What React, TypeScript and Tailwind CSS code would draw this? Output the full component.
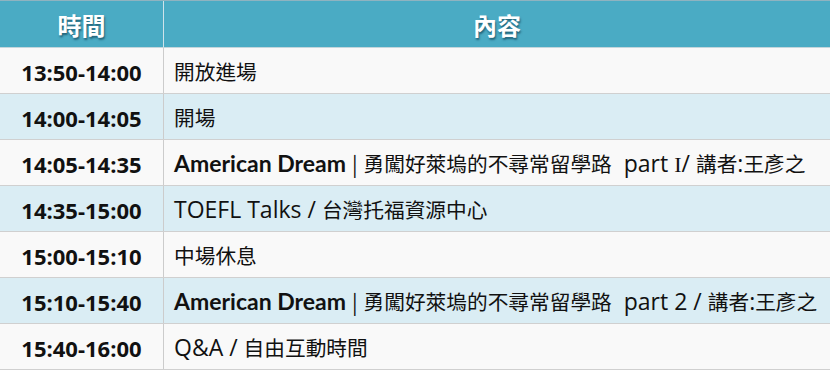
type Seg = { t: string; b?: boolean; serif?: boolean };

const rows: { time: string; segs: Seg[] }[] = [
  { time: '13:50-14:00', segs: [{ t: '開放進場' }] },
  { time: '14:00-14:05', segs: [{ t: '開場' }] },
  {
    time: '14:05-14:35',
    segs: [
      { t: 'American Dream', b: true },
      { t: ' | 勇闖好萊塢的不尋常留學路  part ' },
      { t: 'I', serif: true },
      { t: '/ 講者:王彥之' },
    ],
  },
  { time: '14:35-15:00', segs: [{ t: 'TOEFL Talks / 台灣托福資源中心' }] },
  { time: '15:00-15:10', segs: [{ t: '中場休息' }] },
  {
    time: '15:10-15:40',
    segs: [
      { t: 'American Dream', b: true },
      { t: ' | 勇闖好萊塢的不尋常留學路  part 2 / 講者:王彥之' },
    ],
  },
  { time: '15:40-16:00', segs: [{ t: 'Q&A / 自由互動時間' }] },
];

// split a string into CJK and latin runs so each gets its own size
function runs(s: string) {
  const out: { t: string; cjk: boolean }[] = [];
  for (const ch of s) {
    const cjk = /[|\u3000-\u9fff\uff00-\uffef]/.test(ch);
    const last = out[out.length - 1];
    if (last && last.cjk === cjk) last.t += ch;
    else out.push({ t: ch, cjk });
  }
  return out;
}

function Content({ segs }: { segs: Seg[] }) {
  return (
    <span className="whitespace-pre">
      {segs.map((s, i) => {
        if (s.b)
          return (
            <span key={i} className="font-bold text-[23px] font-['Lato',sans-serif]">
              {s.t}
            </span>
          );
        if (s.serif)
          return (
            <span key={i} className="text-[22px] font-['Liberation_Serif',serif]">
              {s.t}
            </span>
          );
        return runs(s.t).map((r, j) => (
          <span
            key={i + '-' + j}
            className={
              r.cjk
                ? "text-[20.7px] font-['Noto_Sans_CJK_TC',sans-serif]"
                : "text-[23px] font-['Open_Sans',sans-serif]"
            }
          >
            {r.t}
          </span>
        ));
      })}
    </span>
  );
}

export default function App() {
  return (
    <div
      className="w-[830px] h-[370px] overflow-hidden bg-white text-[#111]"
      style={{ fontFamily: '"Open Sans", "Noto Sans CJK TC", sans-serif' }}
    >
      {/* Header */}
      <div className="grid grid-cols-[164px_1fr] h-[48px] bg-[#4aabc4] border-t border-[#8fb3c0] border-b border-b-[#c4d6dc]">
        <div className="flex items-center justify-center pt-[2px] border-r border-[#cfe3ea] text-white font-bold text-[24px] font-['Noto_Sans_CJK_TC',sans-serif] [text-shadow:1px_2px_2px_rgba(0,40,60,0.55)]">
          時間
        </div>
        <div className="flex items-center justify-center pt-[2px] text-white font-bold text-[24px] font-['Noto_Sans_CJK_TC',sans-serif] [text-shadow:1px_2px_2px_rgba(0,40,60,0.55)]">
          內容
        </div>
      </div>

      {rows.map((r, i) => (
        <div
          key={r.time}
          className={
            'grid grid-cols-[164px_1fr] h-[46px] border-b border-[#d0d0d0] ' +
            (i % 2 === 0 ? 'bg-[#f9f9f9]' : 'bg-[#daedf4]')
          }
        >
          <div className="flex items-center justify-center pt-[3px] border-r border-[#cccccc] font-bold text-[22px]">
            {r.time}
          </div>
          <div className="flex items-center pl-[10px] pt-[2px]">
            <Content segs={r.segs} />
          </div>
        </div>
      ))}
    </div>
  );
}
